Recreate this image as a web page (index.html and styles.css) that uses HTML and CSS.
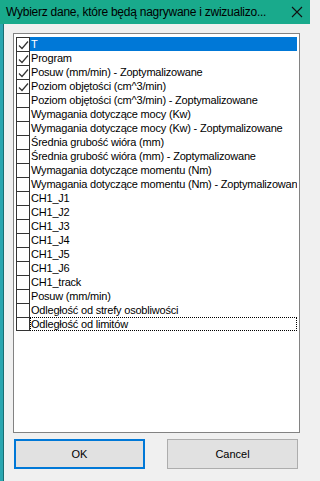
FILE: index.html
```html
<!DOCTYPE html>
<html>
<head>
<meta charset="utf-8">
<link rel="stylesheet" href="styles.css">
</head>
<body>
<div class="titlebar">
  <span class="title">Wybierz dane, które będą nagrywane i zwizualizo...</span>
  <svg class="close" width="12" height="12" viewBox="0 0 12 12"><path d="M1 1L11 11M11 1L1 11" stroke="#111" stroke-width="1.1" fill="none"/></svg>
</div>
<div class="frame">
  <div class="edge"></div>
  <div class="main">
    <div class="listbox">
      <div class="row"><span class="cb on"><svg viewBox="0 0 12 12" width="12" height="12"><path d="M2 6.5L5 9.5L11 2.5" stroke="#333" stroke-width="1.2" fill="none"/></svg></span><span class="lbl sel">T</span></div>
      <div class="row"><span class="cb on"><svg viewBox="0 0 12 12" width="12" height="12"><path d="M2 6.5L5 9.5L11 2.5" stroke="#333" stroke-width="1.2" fill="none"/></svg></span><span class="lbl">Program</span></div>
      <div class="row"><span class="cb on"><svg viewBox="0 0 12 12" width="12" height="12"><path d="M2 6.5L5 9.5L11 2.5" stroke="#333" stroke-width="1.2" fill="none"/></svg></span><span class="lbl">Posuw (mm/min) - Zoptymalizowane</span></div>
      <div class="row"><span class="cb on"><svg viewBox="0 0 12 12" width="12" height="12"><path d="M2 6.5L5 9.5L11 2.5" stroke="#333" stroke-width="1.2" fill="none"/></svg></span><span class="lbl">Poziom objętości (cm^3/min)</span></div>
      <div class="row"><span class="cb"></span><span class="lbl">Poziom objętości (cm^3/min) - Zoptymalizowane</span></div>
      <div class="row"><span class="cb"></span><span class="lbl">Wymagania dotyczące mocy (Kw)</span></div>
      <div class="row"><span class="cb"></span><span class="lbl">Wymagania dotyczące mocy (Kw) - Zoptymalizowane</span></div>
      <div class="row"><span class="cb"></span><span class="lbl">Średnia grubość wióra (mm)</span></div>
      <div class="row"><span class="cb"></span><span class="lbl">Średnia grubość wióra (mm) - Zoptymalizowane</span></div>
      <div class="row"><span class="cb"></span><span class="lbl">Wymagania dotyczące momentu (Nm)</span></div>
      <div class="row"><span class="cb"></span><span class="lbl">Wymagania dotyczące momentu (Nm) - Zoptymalizowane</span></div>
      <div class="row"><span class="cb"></span><span class="lbl">CH1_J1</span></div>
      <div class="row"><span class="cb"></span><span class="lbl">CH1_J2</span></div>
      <div class="row"><span class="cb"></span><span class="lbl">CH1_J3</span></div>
      <div class="row"><span class="cb"></span><span class="lbl">CH1_J4</span></div>
      <div class="row"><span class="cb"></span><span class="lbl">CH1_J5</span></div>
      <div class="row"><span class="cb"></span><span class="lbl">CH1_J6</span></div>
      <div class="row"><span class="cb"></span><span class="lbl">CH1_track</span></div>
      <div class="row"><span class="cb"></span><span class="lbl">Posuw (mm/min)</span></div>
      <div class="row"><span class="cb"></span><span class="lbl">Odległość od strefy osobliwości</span></div>
      <div class="row last"><span class="cb"></span><span class="lbl focus">Odległość od limitów</span></div>
    </div>
    <div class="buttons">
      <button class="btn default">OK</button>
      <button class="btn">Cancel</button>
    </div>
  </div>
</div>
</body>
</html>
```
FILE: styles.css
```css
html, body {
  margin: 0;
  padding: 0;
}
body {
  width: 310px;
  height: 481px;
  overflow: hidden;
  background: #f0f0f0;
  font-family: "Liberation Sans", Arial, sans-serif;
}
.titlebar {
  height: 24px;
  background: #19aa8c;
  display: flex;
  align-items: center;
  justify-content: space-between;
  padding: 0 7px 0 6px;
  box-sizing: border-box;
}
.title {
  font-family: "Liberation Sans", Arial, sans-serif;
  font-size: 12px;
  letter-spacing: -0.25px;
  color: #000;
  white-space: nowrap;
}
.close {
  display: block;
}
.frame {
  display: flex;
  height: 457px;
}
.edge {
  width: 3px;
  background: #2aa6b0;
  border-right: 1px solid #176e72;
}
.main {
  flex: 1;
  padding: 9px 0 0 9px;
}
.listbox {
  border: 1px solid #828282;
  background: #fff;
  padding: 3px 0 0 2px;
  overflow: hidden;
  box-sizing: border-box;
  width: 287px;
  height: 400px;
}
.row {
  display: flex;
  height: 14px;
  font-size: 11px;
  letter-spacing: -0.2px;
  line-height: 14px;
  color: #000;
}
.cb {
  width: 12px;
  height: 13px;
  border: 1px solid #333;
  border-bottom: none;
  flex: none;
  display: flex;
  align-items: center;
  justify-content: center;
}
.row.last .cb {
  height: 12px;
  border-bottom: 1px solid #333;
}
.cb svg {
  display: block;
}
.lbl {
  flex: 1;
  margin-right: 2px;
  padding-left: 1px;
  white-space: nowrap;
  overflow: hidden;
}
.lbl.sel {
  background: #0078d7;
  color: #fff;
}
.lbl.focus {
  outline: 1px dotted #000;
  outline-offset: -1px;
}
.buttons {
  display: flex;
  gap: 22px;
  margin-top: 6px;
  padding-left: 1px;
}
.btn {
  width: 131px;
  height: 30px;
  background: #e1e1e1;
  border: 1px solid #adadad;
  font-family: "Liberation Sans", Arial, sans-serif;
  font-size: 11px;
  color: #000;
  padding: 0;
  margin: 0;
  box-sizing: border-box;
}
.btn.default {
  border: 2px solid #0078d7;
}
```
